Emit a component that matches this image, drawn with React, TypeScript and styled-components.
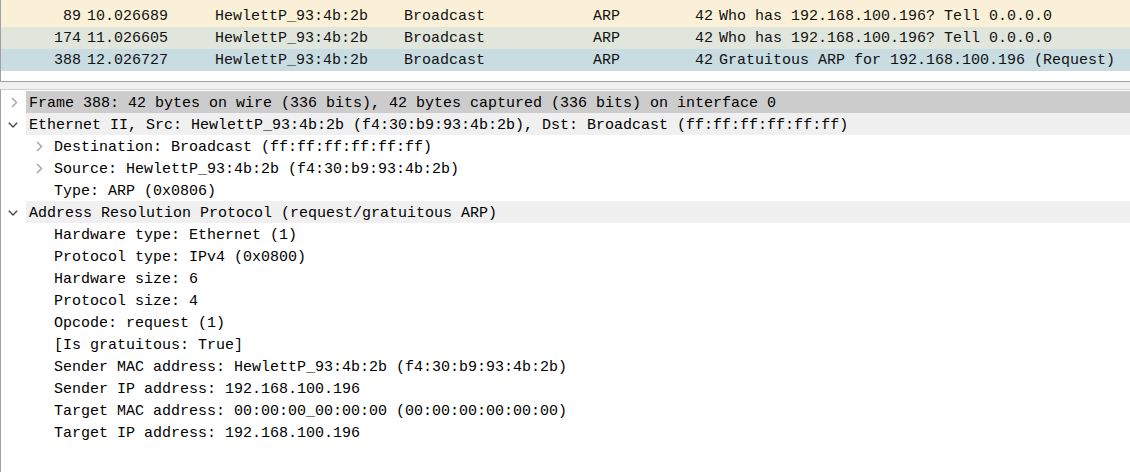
import React from "react";
import styled, { createGlobalStyle } from "styled-components";

const Global = createGlobalStyle`
  html, body { margin: 0; padding: 0; background: #f0f0f0; }
  body { font-family: "Liberation Mono", "DejaVu Sans Mono", monospace; }
  #root { height: 472px; }
`;

const Window = styled.div`
  width: 1130px;
  height: 472px;
  display: flex;
  flex-direction: column;
  overflow: hidden;
  font-family: "Liberation Mono", "DejaVu Sans Mono", monospace;
  font-size: 15px;
  color: #121212;
`;

const PacketPane = styled.div`
  height: 81px;
  flex: none;
  background: #fff;
  border-left: 1px solid #a0a0a0;
  border-bottom: 1px solid #a0a0a0;
  overflow: hidden;
`;

const PacketList = styled.div`
  margin-top: -17px;
`;

const PacketRow = styled.div<{ $bg: string }>`
  display: grid;
  grid-template-columns: 83px 128px 189px 189px 90px 36px 1fr;
  box-sizing: border-box;
  height: 22px;
  padding-top: 1px;
  line-height: 21px;
  background: ${(p) => p.$bg};
  white-space: nowrap;
`;

const Cell = styled.div<{ $right?: boolean }>`
  padding: 0 3px;
  text-align: ${(p) => (p.$right ? "right" : "left")};
  overflow: hidden;
`;

const Splitter = styled.div`
  height: 7px;
  flex: none;
  background: #f0f0f0;
`;

const DetailPane = styled.div`
  flex: 1;
  background: #fff;
  border-top: 1px solid #cfcfcf;
  border-left: 1px solid #a0a0a0;
  padding-top: 1px;
  overflow: hidden;
`;

const TreeRow = styled.div`
  display: flex;
  height: 22px;
  white-space: nowrap;
`;

const Indent = styled.div<{ $level: number }>`
  width: ${(p) => p.$level * 25}px;
  flex: none;
`;

const Toggle = styled.div`
  width: 25px;
  flex: none;
  display: flex;
  align-items: center;
  justify-content: center;
  padding-top: 1px;
`;

const Label = styled.div<{ $bg: string }>`
  flex: 1;
  box-sizing: border-box;
  padding: 3px 0 0 3px;
  line-height: 19px;
  background: ${(p) => p.$bg};
  color: #000;
`;

type Pkt = { no: string; time: string; src: string; dst: string; proto: string; len: string; info: string; bg: string };

const packets: Pkt[] = [
  { no: "88", time: "9.026700", src: "HewlettP_93:4b:2b", dst: "Broadcast", proto: "ARP", len: "42", info: "Who has 192.168.100.196? Tell 0.0.0.0", bg: "#faf0d7" },
  { no: "89", time: "10.026689", src: "HewlettP_93:4b:2b", dst: "Broadcast", proto: "ARP", len: "42", info: "Who has 192.168.100.196? Tell 0.0.0.0", bg: "#faf0d7" },
  { no: "174", time: "11.026605", src: "HewlettP_93:4b:2b", dst: "Broadcast", proto: "ARP", len: "42", info: "Who has 192.168.100.196? Tell 0.0.0.0", bg: "#e1e6dc" },
  { no: "388", time: "12.026727", src: "HewlettP_93:4b:2b", dst: "Broadcast", proto: "ARP", len: "42", info: "Gratuitous ARP for 192.168.100.196 (Request)", bg: "#c9dce2" },
];

type Node = { level: number; state?: "open" | "closed"; text: string; bg?: string };

const nodes: Node[] = [
  { level: 0, state: "closed", text: "Frame 388: 42 bytes on wire (336 bits), 42 bytes captured (336 bits) on interface 0", bg: "#cccccc" },
  { level: 0, state: "open", text: "Ethernet II, Src: HewlettP_93:4b:2b (f4:30:b9:93:4b:2b), Dst: Broadcast (ff:ff:ff:ff:ff:ff)", bg: "#f0f0f0" },
  { level: 1, state: "closed", text: "Destination: Broadcast (ff:ff:ff:ff:ff:ff)" },
  { level: 1, state: "closed", text: "Source: HewlettP_93:4b:2b (f4:30:b9:93:4b:2b)" },
  { level: 1, text: "Type: ARP (0x0806)" },
  { level: 0, state: "open", text: "Address Resolution Protocol (request/gratuitous ARP)", bg: "#f0f0f0" },
  { level: 1, text: "Hardware type: Ethernet (1)" },
  { level: 1, text: "Protocol type: IPv4 (0x0800)" },
  { level: 1, text: "Hardware size: 6" },
  { level: 1, text: "Protocol size: 4" },
  { level: 1, text: "Opcode: request (1)" },
  { level: 1, text: "[Is gratuitous: True]" },
  { level: 1, text: "Sender MAC address: HewlettP_93:4b:2b (f4:30:b9:93:4b:2b)" },
  { level: 1, text: "Sender IP address: 192.168.100.196" },
  { level: 1, text: "Target MAC address: 00:00:00_00:00:00 (00:00:00:00:00:00)" },
  { level: 1, text: "Target IP address: 192.168.100.196" },
];

const Chevron: React.FC<{ state?: "open" | "closed" }> = ({ state }) => {
  if (!state) return null;
  if (state === "open")
    return (
      <svg width="10" height="6" viewBox="0 0 10 6" style={{ marginLeft: -2 }}>
        <polyline points="0.8,0.8 5,5 9.2,0.8" fill="none" stroke="#4a4a4a" strokeWidth="1.4" />
      </svg>
    );
  return (
    <svg width="7" height="11" viewBox="0 0 7 11" style={{ marginLeft: 1 }}>
      <polyline points="1,1 5.5,5.5 1,10" fill="none" stroke="#a8a8a8" strokeWidth="1.5" />
    </svg>
  );
};

export default function App() {
  return (
    <>
      <Global />
      <Window>
        <PacketPane>
          <PacketList>
            {packets.map((p) => (
              <PacketRow key={p.no} $bg={p.bg}>
                <Cell $right>{p.no}</Cell>
                <Cell>{p.time}</Cell>
                <Cell>{p.src}</Cell>
                <Cell>{p.dst}</Cell>
                <Cell>{p.proto}</Cell>
                <Cell $right>{p.len}</Cell>
                <Cell>{p.info}</Cell>
              </PacketRow>
            ))}
          </PacketList>
        </PacketPane>
        <Splitter />
        <DetailPane>
          {nodes.map((n, i) => (
            <TreeRow key={i}>
              <Indent $level={n.level} />
              <Toggle>
                <Chevron state={n.state} />
              </Toggle>
              <Label $bg={n.bg ?? "transparent"}>{n.text}</Label>
            </TreeRow>
          ))}
        </DetailPane>
      </Window>
    </>
  );
}
